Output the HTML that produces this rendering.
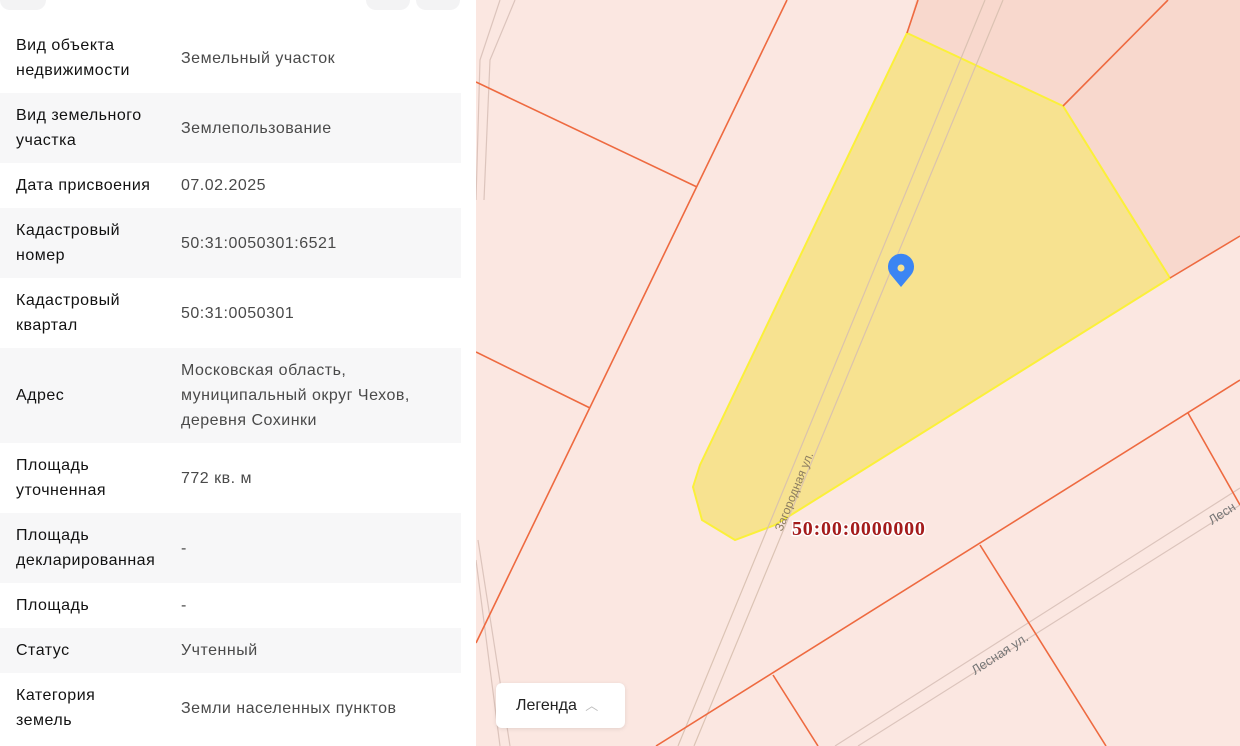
<!DOCTYPE html>
<html><head><meta charset="utf-8"><style>
*{margin:0;padding:0;box-sizing:border-box}
body{width:1240px;height:746px;overflow:hidden;position:relative;background:#fff;font-family:"Liberation Sans",sans-serif}
#left{position:absolute;left:0;top:0;width:476px;height:746px;background:#fff}
.row{position:absolute;left:0;width:461px;display:flex;align-items:center;font-size:16px;line-height:25px;letter-spacing:0.5px}
.row.g{background:#f7f7f8}
.k{position:absolute;left:16px;width:165px;color:#121212}
.v{position:absolute;left:181px;width:275px;color:#4a4a4a}
#map{position:absolute;left:476px;top:0;width:764px;height:746px;background:#fbe7e1;overflow:hidden}
.leg{position:absolute;left:496px;top:683px;width:129px;height:45px;background:#fff;border-radius:6px;box-shadow:0 1px 4px rgba(0,0,0,.1);font-size:16px;color:#222;padding:12px 0 0 20px}
</style></head><body>
<div id="left">
<div style="position:absolute;left:0;top:-10px;width:46px;height:20px;background:#f3f3f4;border-radius:10px"></div>
<div style="position:absolute;left:366px;top:-10px;width:44px;height:20px;background:#f3f3f4;border-radius:10px"></div>
<div style="position:absolute;left:416px;top:-10px;width:44px;height:20px;background:#f3f3f4;border-radius:10px"></div>
<div class="row" style="top:23px;height:70px"><div class="k">Вид объекта<br>недвижимости</div><div class="v">Земельный участок</div></div>
<div class="row g" style="top:93px;height:70px"><div class="k">Вид земельного<br>участка</div><div class="v">Землепользование</div></div>
<div class="row" style="top:163px;height:45px"><div class="k">Дата присвоения</div><div class="v">07.02.2025</div></div>
<div class="row g" style="top:208px;height:70px"><div class="k">Кадастровый<br>номер</div><div class="v">50:31:0050301:6521</div></div>
<div class="row" style="top:278px;height:70px"><div class="k">Кадастровый<br>квартал</div><div class="v">50:31:0050301</div></div>
<div class="row g" style="top:348px;height:95px"><div class="k">Адрес</div><div class="v">Московская область,<br>муниципальный округ Чехов,<br>деревня Сохинки</div></div>
<div class="row" style="top:443px;height:70px"><div class="k">Площадь<br>уточненная</div><div class="v">772 кв. м</div></div>
<div class="row g" style="top:513px;height:70px"><div class="k">Площадь<br>декларированная</div><div class="v">-</div></div>
<div class="row" style="top:583px;height:45px"><div class="k">Площадь</div><div class="v">-</div></div>
<div class="row g" style="top:628px;height:45px"><div class="k">Статус</div><div class="v">Учтенный</div></div>
<div class="row" style="top:673px;height:70px"><div class="k">Категория<br>земель</div><div class="v">Земли населенных пунктов</div></div>
</div>
<div id="map">
<svg width="764" height="746" viewBox="476 0 764 746" style="position:absolute;left:0;top:0">
<polygon points="916,0 907,33 1063,106 1168,0" fill="#f8d8cd"/>
<polygon points="1168,0 1063,106 1170,278 1240,236 1240,0" fill="#f8d8cd"/>
<g stroke="#dcc4bc" stroke-width="1.2" fill="none">
<path d="M500 0 L480 60 L476 200"/><path d="M515 0 L490 60 L484 200"/>
<path d="M476 560 L500 746"/><path d="M478 540 L510 746"/>
<line x1="835" y1="746" x2="1240" y2="488"/><line x1="858" y1="746" x2="1240" y2="505"/>
</g>
<polygon points="907,33 1063,106 1170,278 775,525 735,540 702,520 693,487 700,465" fill="#f7e290" stroke="#fbf03a" stroke-width="2"/>
<g stroke="#d8c0b0" stroke-width="1.2" fill="none" opacity="0.9">
<line x1="985" y1="0" x2="678" y2="746"/><line x1="1003" y1="0" x2="694" y2="746"/>
</g>
<g stroke="#ee6a40" stroke-width="1.6" fill="none">
<line x1="787" y1="0" x2="476" y2="643"/>
<line x1="476" y1="82" x2="697" y2="187"/>
<line x1="476" y1="352" x2="590" y2="408"/>
<line x1="918" y1="0" x2="907" y2="33"/>
<line x1="1063" y1="106" x2="1168" y2="0"/>
<line x1="1170" y1="278" x2="1240" y2="236"/>
<line x1="1240" y1="380" x2="656" y2="746"/>
<line x1="980" y1="545" x2="1106" y2="746"/>
<line x1="773" y1="675" x2="818" y2="746"/>
<line x1="1188" y1="413" x2="1240" y2="505"/>
</g>
<text transform="translate(782,532) rotate(-68)" font-size="12" fill="#8c7d60" font-family="Liberation Sans">Загородная ул.</text>
<text transform="translate(975,675) rotate(-33)" font-size="13" fill="#777" font-family="Liberation Sans">Лесная ул.</text>
<text transform="translate(1212,525) rotate(-33)" font-size="13" fill="#777" font-family="Liberation Sans">Лесн</text>
<text x="792" y="535" font-family="Liberation Serif" font-weight="bold" font-size="20" fill="#a41c1c" stroke="#fff" stroke-width="3" paint-order="stroke" letter-spacing="0.8">50:00:0000000</text>
<path d="M901 287 L891 275 A13 13 0 1 1 911 275 Z" fill="#3b85f3"/>
<circle cx="901" cy="268" r="3.5" fill="#f7e290"/>
</svg>
</div>
<div class="leg">Легенда <span style="color:#bbb;font-size:13px;margin-left:4px">︿</span></div>
</body></html>
